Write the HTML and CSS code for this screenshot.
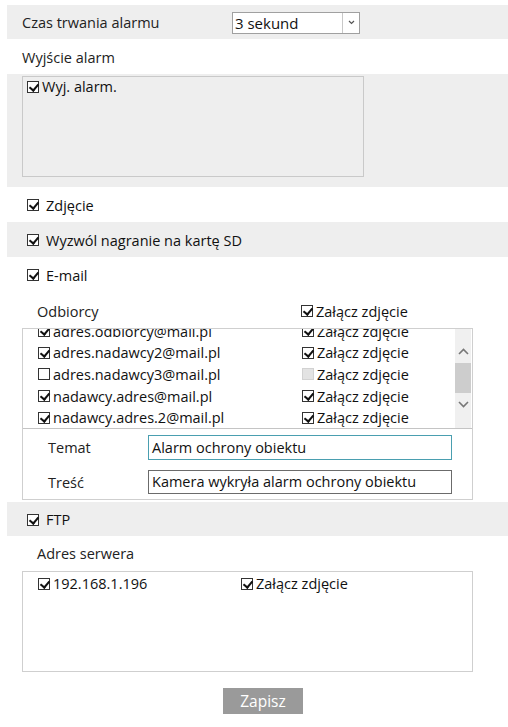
FILE: index.html
```html
<!DOCTYPE html>
<html lang="pl">
<head>
<meta charset="utf-8">
<title>Alarm</title>
<link rel="stylesheet" href="styles.css">
</head>
<body>
<div class="page">
  <div class="row gray r-duration">
    <span class="label">Czas trwania alarmu</span>
    <div class="select">
      <span class="select-value">3 sekund</span>
      <span class="select-arrow"><svg width="7" height="5" viewBox="0 0 7 5"><path d="M1 1 L3.5 3.5 L6 1" fill="none" stroke="#555" stroke-width="1.2"/></svg></span>
    </div>
  </div>
  <div class="row white">
    <span class="label">Wyjście alarm</span>
  </div>
  <div class="gray out-wrap">
    <div class="out-box">
      <div class="item"><span class="cb on"></span><span class="cb-text">Wyj. alarm.</span></div>
    </div>
  </div>
  <div class="row white check-row"><span class="cb on"></span><span class="cb-label">Zdjęcie</span></div>
  <div class="row gray check-row"><span class="cb on"></span><span class="cb-label">Wyzwól nagranie na kartę SD</span></div>
  <div class="row white check-row"><span class="cb on"></span><span class="cb-label">E-mail</span></div>

  <div class="section">
    <div class="list-head">
      <span class="col1 head-text">Odbiorcy</span>
      <span class="col2 item"><span class="cb on"></span><span class="cb-text">Załącz zdjęcie</span></span>
    </div>
    <div class="mail-box">
      <div class="mail-list">
        <div class="mail-rows">
          <div class="mail-row"><span class="col1 item"><span class="cb on"></span><span class="cb-text">adres.odbiorcy@mail.pl</span></span><span class="col2 item"><span class="cb on"></span><span class="cb-text">Załącz zdjęcie</span></span></div>
          <div class="mail-row"><span class="col1 item"><span class="cb on"></span><span class="cb-text">adres.nadawcy2@mail.pl</span></span><span class="col2 item"><span class="cb on"></span><span class="cb-text">Załącz zdjęcie</span></span></div>
          <div class="mail-row"><span class="col1 item"><span class="cb"></span><span class="cb-text">adres.nadawcy3@mail.pl</span></span><span class="col2 item"><span class="cb disabled"></span><span class="cb-text">Załącz zdjęcie</span></span></div>
          <div class="mail-row"><span class="col1 item"><span class="cb on"></span><span class="cb-text">nadawcy.adres@mail.pl</span></span><span class="col2 item"><span class="cb on"></span><span class="cb-text">Załącz zdjęcie</span></span></div>
          <div class="mail-row"><span class="col1 item"><span class="cb on"></span><span class="cb-text">nadawcy.adres.2@mail.pl</span></span><span class="col2 item"><span class="cb on"></span><span class="cb-text">Załącz zdjęcie</span></span></div>
        </div>
        <div class="scrollbar">
          <span class="sb-arrow"><svg width="11" height="7" viewBox="0 0 11 7"><path d="M1 6 L5.5 1.5 L10 6" fill="none" stroke="#777" stroke-width="1.6"/></svg></span>
          <span class="sb-thumb"></span>
          <span class="sb-arrow"><svg width="11" height="7" viewBox="0 0 11 7"><path d="M1 1 L5.5 5.5 L10 1" fill="none" stroke="#777" stroke-width="1.6"/></svg></span>
        </div>
      </div>
      <div class="mail-fields">
        <div class="field"><span class="field-label">Temat</span><div class="input focus">Alarm ochrony obiektu</div></div>
        <div class="field"><span class="field-label">Treść</span><div class="input short">Kamera wykryła alarm ochrony obiektu</div></div>
      </div>
    </div>
  </div>

  <div class="row gray check-row ftp-row"><span class="cb on"></span><span class="cb-label">FTP</span></div>
  <div class="section">
    <div class="list-head ftp-head"><span class="col1 head-text">Adres serwera</span></div>
    <div class="ftp-box">
      <div class="ftp-row-item"><span class="ftp-col1 item"><span class="cb on"></span><span class="cb-text">192.168.1.196</span></span><span class="item"><span class="cb on"></span><span class="cb-text">Załącz zdjęcie</span></span></div>
    </div>
  </div>
  <div class="actions"><span class="btn">Zapisz</span></div>
</div>
</body>
</html>
```
FILE: styles.css
```css
* { box-sizing: border-box; }
html, body { margin: 0; padding: 0; background: #fff; }
body {
  font-family: "Open Sans", "Noto Sans", "DejaVu Sans", sans-serif;
  font-size: 14.5px;
  color: #222;
}
.page {
  width: 501px;
  margin-left: 7px;
  padding-top: 5px;
}
.row {
  display: flex;
  align-items: center;
  height: 35px;
  padding-left: 15px;
  padding-top: 1px;
}
.gray { background: #eeeeee; }
.white { background: #fff; }
.r-duration { height: 34px; }
.label { width: 210px; }
.select {
  display: flex;
  width: 128px;
  height: 22px;
  border: 1px solid #a0a0a0;
  background: #fff;
}
.select-value {
  flex: 1;
  padding-left: 2px;
  line-height: 20px;
  font-size: 15px;
  color: #111;
}
.select-arrow {
  width: 17px;
  border-left: 1px solid #c8c8c8;
  display: flex;
  align-items: center;
  justify-content: center;
}
.out-wrap {
  padding: 2px 0 10px 15px;
}
.out-box {
  width: 342px;
  height: 101px;
  border: 1px solid #c9c9c9;
  padding: 0 0 0 4px;
}
.item {
  display: flex;
  align-items: center;
}
.cb {
  display: inline-block;
  width: 12px;
  height: 12px;
  border: 1px solid #333;
  background: #fff;
  flex: none;
  position: relative;
}
.cb.on::after {
  content: "";
  position: absolute;
  left: 3px;
  top: 0px;
  width: 4px;
  height: 7px;
  border-right: 2px solid #111;
  border-bottom: 2px solid #111;
  transform: rotate(40deg);
}
.cb.disabled {
  background: #e3e3e3;
  border-color: #d2d2d2;
}
.cb-text {
  margin-left: 3px;
  color: #111;
}
.check-row {
  padding-left: 20px;
}
.cb-label {
  margin-left: 7px;
  color: #111;
}
.section {
  padding-left: 15px;
}
.list-head {
  display: flex;
  align-items: center;
  height: 36px;
  padding-left: 15px;
  padding-top: 2px;
}
.col1 { width: 264px; flex: none; }
.head-text { color: #222; }
.mail-box {
  width: 451px;
  border: 1px solid #cfcfcf;
}
.mail-list {
  display: flex;
  height: 100px;
  border-bottom: 1px solid #c4c4c4;
  overflow: hidden;
}
.mail-rows {
  flex: 1;
  padding-left: 15px;
  margin-top: -9px;
}
.mail-row {
  display: flex;
  align-items: center;
  height: 21.6px;
  padding-top: 1px;
}
.scrollbar {
  width: 16px;
  margin-right: 1px;
  background: #f0f0f0;
  display: flex;
  flex-direction: column;
  align-items: center;
  padding-top: 17px;
}
.sb-arrow {
  height: 10px;
  display: flex;
  align-items: center;
  justify-content: center;
}
.sb-thumb {
  width: 16px;
  height: 30px;
  margin: 7px 0 6px;
  background: #cdcdcd;
}
.mail-fields {
  padding: 6px 0 5px 25px;
  display: flex;
  flex-direction: column;
  gap: 10px;
}
.field {
  display: flex;
  align-items: center;
}
.field-label {
  width: 100px;
  color: #222;
}
.input {
  width: 304px;
  height: 25px;
  border: 1px solid #6b6b6b;
  padding-left: 3px;
  line-height: 23px;
  color: #111;
}
.input.short { height: 24px; line-height: 22px; }
.input.focus {
  border-color: #4a9fb0;
}
.ftp-row {
  margin-top: 2px;
  height: 34px;
}
.ftp-head { height: 35px; padding-top: 0; }
.ftp-box {
  width: 451px;
  height: 101px;
  border: 1px solid #cfcfcf;
  padding-left: 15px;
}
.ftp-row-item {
  display: flex;
  align-items: center;
  height: 22px;
  padding-top: 1px;
}
.ftp-col1 { width: 203px; }
.actions {
  padding: 16px 0 0 216px;
}
.btn {
  display: inline-flex;
  align-items: center;
  justify-content: center;
  width: 80px;
  height: 26px;
  background: #9a9a9a;
  color: #fff;
  font-size: 15.5px;
}
```
